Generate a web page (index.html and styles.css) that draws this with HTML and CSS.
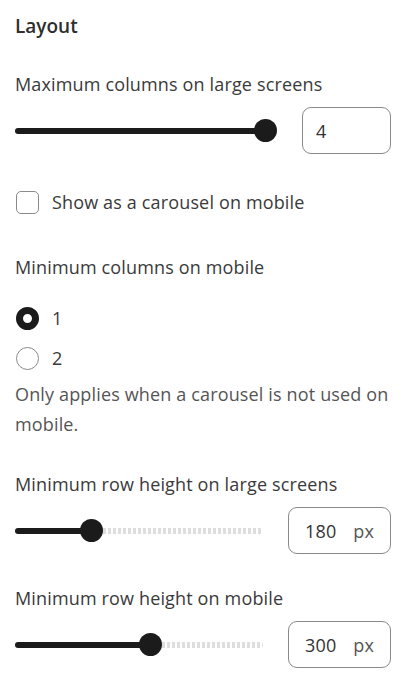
FILE: index.html
```html
<!DOCTYPE html>
<html lang="en">
<head>
<meta charset="utf-8">
<title>Layout</title>
<link rel="stylesheet" href="styles.css">
</head>
<body>
<div class="panel">
  <h2 class="title">Layout</h2>

  <div class="field">
    <div class="label">Maximum columns on large screens</div>
    <div class="slider-row">
      <div class="slider" style="--p:1">
        <div class="fill"></div>
        <div class="thumb"></div>
      </div>
      <div class="num num-small"><span class="val">4</span></div>
    </div>
  </div>

  <label class="check-row">
    <span class="checkbox"></span>
    <span class="opt-text">Show as a carousel on mobile</span>
  </label>

  <div class="field field-radio">
    <div class="label">Minimum columns on mobile</div>
    <div class="radio-row"><span class="radio radio-on"></span><span class="opt-text">1</span></div>
    <div class="radio-row"><span class="radio"></span><span class="opt-text">2</span></div>
    <p class="help">Only applies when a carousel is not used on mobile.</p>
  </div>

  <div class="field">
    <div class="label">Minimum row height on large screens</div>
    <div class="slider-row">
      <div class="slider" style="--p:0.288">
        <div class="fill"></div>
        <div class="thumb"></div>
        <div class="rest"></div>
      </div>
      <div class="num"><span class="val">180</span><span class="unit">px</span></div>
    </div>
  </div>

  <div class="field">
    <div class="label">Minimum row height on mobile</div>
    <div class="slider-row">
      <div class="slider" style="--p:0.551">
        <div class="fill"></div>
        <div class="thumb"></div>
        <div class="rest"></div>
      </div>
      <div class="num"><span class="val">300</span><span class="unit">px</span></div>
    </div>
  </div>
</div>
</body>
</html>
```

FILE: styles.css
```css
* { box-sizing: border-box; }
body {
  margin: 0;
  background: #fff;
  font-family: "Open Sans", "Noto Sans", sans-serif;
  color: #3a3a3a;
  font-size: 18px;
  letter-spacing: 0.15px;
}
.panel {
  padding: 12px 12px 0 15px;
  display: flex;
  flex-direction: column;
}
.title {
  margin: 0;
  font-size: 19px;
  font-weight: 600;
  color: #2e2e2e;
  line-height: 28px;
  letter-spacing: 0;
}
.field {
  display: flex;
  flex-direction: column;
}
.label {
  line-height: 28px;
  margin-top: 30px;
}
.slider-row {
  display: flex;
  align-items: center;
  gap: 25px;
  margin-top: 9px;
}
.slider {
  flex: 1;
  display: flex;
  align-items: center;
  height: 23px;
}
.fill {
  flex: none;
  width: calc((100% - 23px) * var(--p) + 11.5px);
  height: 6px;
  background: #1b1b1b;
  border-radius: 3px 0 0 3px;
}
.thumb {
  flex: none;
  width: 23px;
  height: 23px;
  border-radius: 50%;
  background: #1b1b1b;
  margin-left: -11.5px;
  position: relative;
  z-index: 1;
}
.rest {
  flex: 1;
  height: 6px;
  border-radius: 0 3px 3px 0;
  background: repeating-linear-gradient(90deg, #dedede 0 3px, transparent 3px 5px);
}
.num {
  flex: none;
  width: 103px;
  height: 47px;
  border: 1px solid #8a8a8a;
  border-radius: 9px;
  display: flex;
  align-items: center;
  padding-left: 16px;
  gap: 17px;
}
.num-small { width: 89px; padding-left: 13px; }
.val { color: #333; }
.unit { color: #555; }
.check-row {
  display: flex;
  align-items: center;
  gap: 13px;
  margin-top: 36px;
  padding-left: 1px;
}
.checkbox {
  width: 23px;
  height: 23px;
  border: 1px solid #8a8a8a;
  border-radius: 5px;
  flex: none;
}
.opt-text { line-height: 24px; }
.field-radio .label { margin-top: 39px; }
.radio-row {
  display: flex;
  align-items: center;
  gap: 13px;
  padding-left: 1px;
  margin-top: 16px;
}
.field-radio .label + .radio-row { margin-top: 25px; }
.radio {
  width: 23px;
  height: 23px;
  border-radius: 50%;
  border: 1px solid #8a8a8a;
  flex: none;
}
.radio-on {
  border: 7px solid #1b1b1b;
}
.help {
  margin: 9px 0 0;
  line-height: 30px;
  color: #555;
}
.field-radio + .field .label { margin-top: 31px; }
```
